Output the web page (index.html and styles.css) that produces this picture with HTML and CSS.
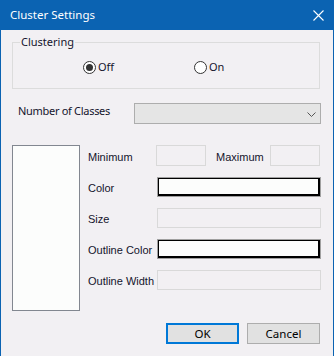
FILE: index.html
```html
<!DOCTYPE html>
<html>
<head>
<meta charset="utf-8">
<link rel="stylesheet" href="styles.css">
</head>
<body>
<div class="window">
  <div class="titlebar">
    <span class="title">Cluster Settings</span>
    <svg class="close" width="11" height="11" viewBox="0 0 11 11"><path d="M0.5 0.5 L10.5 10.5 M10.5 0.5 L0.5 10.5" stroke="#fff" stroke-width="1.1" fill="none"/></svg>
  </div>
  <div class="content">
    <div class="group">
      <span class="legend">Clustering</span>
      <div class="radios">
        <span class="radio radio-off"><span class="circle checked"></span><span class="rtext">Off</span></span>
        <span class="radio"><span class="circle"></span><span class="rtext">On</span></span>
      </div>
    </div>
    <div class="classes-row">
      <span class="label-big">Number of Classes</span>
      <div class="select">
        <svg width="9" height="5" viewBox="0 0 9 5"><path d="M0.5 0.5 L4.5 4.5 L8.5 0.5" stroke="#555" stroke-width="1" fill="none"/></svg>
      </div>
    </div>
    <div class="lower">
      <div class="listbox"></div>
      <div class="fields">
        <div class="row row-minmax">
          <span class="lbl lbl-min">Minimum</span>
          <span class="input small"></span>
          <span class="lbl lbl-max">Maximum</span>
          <span class="input small"></span>
        </div>
        <div class="row">
          <span class="lbl">Color</span>
          <span class="colorbox"></span>
        </div>
        <div class="row">
          <span class="lbl">Size</span>
          <span class="input wide"></span>
        </div>
        <div class="row">
          <span class="lbl">Outline Color</span>
          <span class="colorbox"></span>
        </div>
        <div class="row">
          <span class="lbl">Outline Width</span>
          <span class="input wide"></span>
        </div>
      </div>
    </div>
    <div class="buttons">
      <span class="btn btn-ok">OK</span>
      <span class="btn">Cancel</span>
    </div>
  </div>
</div>
</body>
</html>
```
FILE: styles.css
```css
* { box-sizing: border-box; }
html, body { margin: 0; padding: 0; }
body { width: 334px; height: 356px; background: #f2f0f3; overflow: hidden; }

.window {
  width: 334px;
  height: 356px;
  background: #f2f0f3;
  border-left: 1px solid #0b63b2;
  border-right: 1px solid #0b63b2;
  display: flex;
  flex-direction: column;
}

.titlebar {
  height: 30px;
  margin: 0 -1px;
  background: #0b63b2;
  display: flex;
  align-items: center;
  justify-content: space-between;
  padding: 0 10px 1px 10px;
}
.title {
  color: #fff;
  font-family: "Noto Sans", sans-serif;
  font-size: 11.5px;
}
.close { margin-top: 1px; }

.content {
  display: flex;
  flex-direction: column;
  padding: 0 12px 0 11px;
  font-family: "Noto Sans", sans-serif;
  font-size: 11px;
  color: #14142c;
}

.group {
  margin-top: 12px;
  margin-right: 1px;
  height: 47px;
  border: 1px solid #dcdcdc;
}
.legend {
  display: block;
  width: fit-content;
  margin: -8px 0 0 7px;
  padding: 0 1px;
  line-height: 14px;
  background: #f2f0f3;
}
.radios {
  display: flex;
  margin-top: 10px;
  padding-left: 70px;
  height: 16px;
  align-items: center;
}
.radio { display: flex; align-items: center; gap: 2px; }
.radio-off { width: 111px; }
.circle {
  width: 13px;
  height: 13px;
  border: 1px solid #333;
  border-radius: 50%;
  background: #fff;
  display: flex;
  align-items: center;
  justify-content: center;
}
.circle.checked::after {
  content: "";
  width: 7px;
  height: 7px;
  border-radius: 50%;
  background: #333;
}
.rtext { line-height: 16px; }

.classes-row {
  display: flex;
  margin-top: 14px;
  align-items: flex-start;
}
.label-big {
  width: 122px;
  padding-left: 6px;
  line-height: 16px;
  letter-spacing: -0.3px;
}
.select {
  width: 188px;
  height: 21px;
  background: #e5e5e5;
  border: 1px solid #adadad;
  display: flex;
  align-items: center;
  justify-content: flex-end;
  padding: 1px 4px 0 0;
}

.lower {
  display: flex;
  margin-top: 21px;
  gap: 8px;
}
.listbox {
  width: 68px;
  height: 166px;
  border: 1px solid #828790;
  background: #fcfdfc;
}
.fields {
  display: flex;
  flex-direction: column;
  gap: 10px;
}
.row {
  display: flex;
  align-items: center;
  height: 21px;
}
.lbl {
  width: 69px;
  font-family: "Liberation Sans", Arial, sans-serif;
  font-size: 11px;
  padding-top: 2px;
  white-space: nowrap;
}
.lbl-min { width: 68px; }
.lbl-max { width: 54px; margin-left: 10px; }
.input {
  height: 21px;
  border: 1px solid #d9d9d9;
  background: #f2f0f3;
}
.input.small { width: 50px; }
.input.wide { width: 164px; height: 20px; }
.colorbox {
  width: 164px;
  height: 20px;
  background: #fcfdfc;
  border: 1px solid #a0a0a0;
  box-shadow: inset 1px 1px 0 #000, inset -2px -2px 0 #000;
}

.buttons {
  display: flex;
  justify-content: flex-end;
  gap: 8px;
  margin-top: 12px;
  padding-right: 1px;
}
.btn {
  width: 73px;
  height: 21px;
  background: #e1e1e1;
  border: 1px solid #adadad;
  display: flex;
  align-items: center;
  justify-content: center;
  font-size: 11.5px;
  color: #000;
  padding-bottom: 1px;
}
.btn-ok { border: 2px solid #0078d7; }
```
